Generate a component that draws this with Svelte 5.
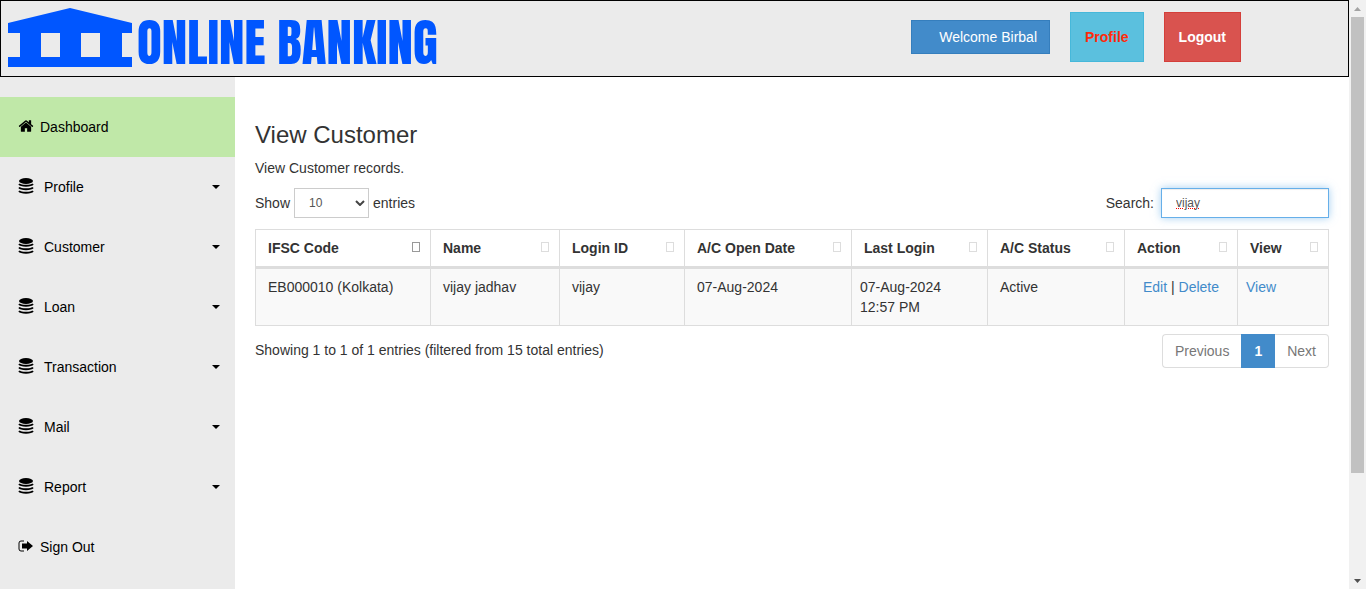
<script>
  let pageSize = $state('10');
  let query = $state('vijay');

  const menu = ['Profile', 'Customer', 'Loan', 'Transaction', 'Mail', 'Report'];

  const columns = [
    { name: 'IFSC Code', width: 175, sorted: true },
    { name: 'Name', width: 129 },
    { name: 'Login ID', width: 125 },
    { name: 'A/C Open Date', width: 167 },
    { name: 'Last Login', width: 136 },
    { name: 'A/C Status', width: 137 },
    { name: 'Action', width: 113 },
    { name: 'View', width: 91 }
  ];
</script>

<div class="window">
  <div class="page">
    <header>
      <a class="brand" href="#home">
        <svg class="bank" viewBox="0 0 124 60" aria-hidden="true">
          <path d="M0 15 62 0l62 15v10h-10v24h10v10H0V49h12V25H0zM33 25v24h19V25zM73 25v24h19V25z" fill-rule="evenodd" />
        </svg>
        <span>ONLINE BANKING</span>
      </a>
      <div class="account">
        <button class="welcome" type="button">Welcome Birbal</button>
        <a class="tile info" href="#profile">Profile</a>
        <a class="tile danger" href="#logout">Logout</a>
      </div>
    </header>

    <div class="body">
      <nav>
        <a class="item active" href="#dashboard">
          <svg width="16" height="16" viewBox="0 0 1664 1792" aria-hidden="true">
            <path d="M1408 992v480q0 26-19 45t-45 19h-384v-384h-256v384h-384q-26 0-45-19t-19-45v-480q0-1 .5-3t.5-3l575-474 575 474q1 2 1 6zm223-69l-62 74q-8 9-21 11h-3q-13 0-21-7l-692-577-692 577q-12 8-24 7-13-2-21-11l-62-74q-8-10-7-23.5t11-21.5l719-599q32-26 76-26t76 26l244 204v-195q0-14 9-23t23-9h192q14 0 23 9t9 23v408l219 182q10 8 11 21.5t-7 23.5z" />
          </svg>
          Dashboard
        </a>
        {#each menu as label}
          <a class="item group" href="#{label.toLowerCase()}">
            <svg width="16" height="16" viewBox="0 0 16 16" aria-hidden="true">
              <ellipse cx="8" cy="3" rx="7" ry="3" />
              <path d="M1 6c2 2.300 12 2.300 14 0M1 9.500c2 2.300 12 2.300 14 0M1 13c2 2.300 12 2.300 14 0" fill="none" stroke="#000" stroke-width="1.900" />
            </svg>
            <span>{label}</span>
            <i class="caret"></i>
          </a>
        {/each}
        <a class="item" href="#signout">
          <svg width="16" height="16" viewBox="0 0 16 16" aria-hidden="true">
            <path d="M6 3H3Q1 3 1 5v6q0 2 2 2h3" fill="none" stroke="#000" stroke-width="1" />
            <path d="M4 5.500h5V3l6 5-6 5v-2.500H4z" />
          </svg>
          Sign Out
        </a>
      </nav>

      <main>
        <h3>View Customer</h3>
        <p>View Customer records.</p>

        <div class="tools">
          <label>
            Show
            <span class="picker">
              <select bind:value={pageSize}>
                <option>10</option>
                <option>25</option>
                <option>50</option>
                <option>100</option>
              </select>
              <svg width="10" height="6" viewBox="0 0 10 6" aria-hidden="true">
                <path d="M1 1l4 4 4-4" fill="none" stroke="#444" stroke-width="2" />
              </svg>
            </span>
            entries
          </label>
          <label class="search">
            Search:
            <input type="text" bind:value={query} />
          </label>
        </div>

        <table>
          <colgroup>
            {#each columns as col}
              <col style:width="{col.width}px" />
            {/each}
          </colgroup>
          <thead>
            <tr>
              {#each columns as col}
                <th>
                  <button type="button">
                    {col.name}
                    <i class="sort" class:sorted={col.sorted}></i>
                  </button>
                </th>
              {/each}
            </tr>
          </thead>
          <tbody>
            <tr>
              <td>EB000010 (Kolkata)</td>
              <td>vijay jadhav</td>
              <td>vijay</td>
              <td>07-Aug-2024</td>
              <td class="tight">07-Aug-2024 12:57 PM</td>
              <td>Active</td>
              <td class="center"><a href="#edit">Edit</a> | <a href="#delete">Delete</a></td>
              <td class="tight"><a href="#view">View</a></td>
            </tr>
          </tbody>
        </table>

        <div class="summary">
          <div class="info-text">Showing 1 to 1 of 1 entries (filtered from 15 total entries)</div>
          <div class="pager">
            <button type="button">Previous</button>
            <button type="button" class="current">1</button>
            <button type="button">Next</button>
          </div>
        </div>
      </main>
    </div>
  </div>

  <div class="scrollbar" aria-hidden="true">
    <svg width="7" height="4" viewBox="0 0 7 4"><path d="M0 4 3.500 0 7 4z" fill="#a3a3a3" /></svg>
    <div class="track"><div class="thumb"></div></div>
    <svg width="7" height="4" viewBox="0 0 7 4"><path d="M0 0 3.500 4 7 0z" fill="#505050" /></svg>
  </div>
</div>

<style>
  :global(body) {
    font-family: "Liberation Sans", Arial, sans-serif;
    font-size: 14px;
    line-height: 20px;
    color: #333;
    background: #fff;
  }
  .window, .window * { box-sizing: border-box; }
  .window {
    display: grid;
    grid-template-columns: minmax(0, 1fr) 17px;
    height: 100vh;
    overflow: hidden;
  }
  button, input, select { font: inherit; color: inherit; margin: 0; border-radius: 0; }
  button { cursor: pointer; }
  a { color: #428bca; text-decoration: none; }

  .page { display: flex; flex-direction: column; overflow: hidden; }
  header {
    display: flex;
    flex: none;
    justify-content: space-between;
    align-items: flex-start;
    padding: 7px 107px 8px 7px;
    border: 1px solid #000;
    background: #ebebeb;
  }
  .brand {
    display: flex;
    align-items: flex-end;
    gap: 5px;
    color: #0056ff;
    font: 51px/50px Anton, "Liberation Sans", sans-serif;
    white-space: nowrap;
  }
  .bank { width: 124px; height: 60px; fill: #0056ff; }
  .account { display: flex; align-items: center; gap: 20px; padding-top: 4px; }
  .welcome {
    padding: 6px 12px 6px 27px;
    border: 1px solid #357ebd;
    background: #428bca;
    color: #fff;
  }
  .tile { padding: 14px; border: 1px solid; font-weight: bold; }
  .info { background: #5bc0de; border-color: #46b8da; color: #ff2a0a; }
  .danger { background: #d9534f; border-color: #d43f3a; color: #fff; }

  .body { display: flex; flex: 1; min-height: 0; }
  nav {
    flex: none;
    width: 235px;
    padding-top: 20px;
    background: #ebebeb;
    overflow: hidden;
  }
  .item {
    display: flex;
    align-items: center;
    gap: 6px;
    height: 60px;
    padding: 0 15px 0 18px;
    color: #000;
  }
  .item svg { margin-bottom: 2px; }
  .item.active { background: #c0e8a8; }
  .group { gap: 10px; }
  .caret {
    margin-left: auto;
    border-top: 4px solid #000;
    border-left: 4px solid transparent;
    border-right: 4px solid transparent;
  }

  main { flex: 1; min-width: 0; padding: 45px 20px; }
  h3 { margin: 0 0 10px; font-size: 24px; line-height: 26px; font-weight: normal; }
  p { margin: 0 0 10px; }
  .tools { display: flex; justify-content: space-between; margin-bottom: 11px; }
  label { display: flex; align-items: center; gap: 4px; }
  .search { gap: 7px; }
  .picker { position: relative; display: flex; }
  .picker svg { position: absolute; right: 4px; top: 12px; pointer-events: none; }
  select, input {
    height: 30px;
    padding: 5px 14px;
    border: 1px solid #ccc;
    background: #fff;
    color: #555;
    font-size: 12px;
    line-height: 18px;
  }
  select { width: 75px; appearance: none; }
  input {
    width: 168px;
    border-color: #66afe9;
    outline: 0;
    box-shadow: inset 0 1px 1px rgba(0, 0, 0, .075), 0 0 8px rgba(102, 175, 233, .6);
    text-decoration: underline dotted #f00 1px;
  }

  table { width: 100%; table-layout: fixed; border-collapse: collapse; }
  th, td { border: 1px solid #ddd; text-align: left; vertical-align: top; }
  th { padding: 0; border-bottom-width: 3px; }
  th button {
    display: flex;
    justify-content: space-between;
    align-items: center;
    width: 100%;
    padding: 8px 10px 8px 12px;
    border: 0;
    background: none;
    font-weight: bold;
  }
  .sort { width: 8px; height: 10px; margin-bottom: 2px; border: 1px solid #ddd; }
  .sorted { border-color: #999; }
  td { height: 57px; padding: 8px 12px; background: #f9f9f9; }
  td.tight { padding: 8px; }
  td.center { padding: 8px 0; text-align: center; }

  .summary { display: flex; justify-content: space-between; padding-top: 8px; }
  .info-text { padding-top: 6px; }
  .pager { display: flex; }
  .pager button { padding: 6px 12px; border: 1px solid #ddd; background: #fff; color: #777; }
  .pager button:first-child { border-radius: 4px 0 0 4px; border-right: 0; }
  .pager button:last-child { border-radius: 0 4px 4px 0; border-left: 0; }
  .pager .current { border-color: #428bca; background: #428bca; color: #fff; font-weight: bold; }

  .scrollbar {
    display: flex;
    flex-direction: column;
    align-items: center;
    padding: 7px 2px 6px;
    background: #f1f1f1;
  }
  .track { flex: 1; width: 13px; padding: 6px 0; }
  .thumb { height: 82%; background: #c1c1c1; }
</style>
